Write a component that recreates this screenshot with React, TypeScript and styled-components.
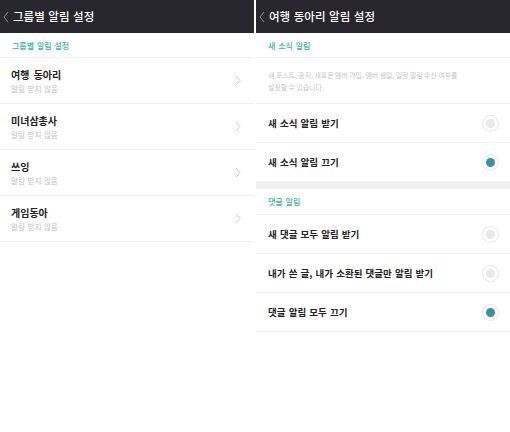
import React from 'react';
import styled, { createGlobalStyle } from 'styled-components';

const GlobalStyle = createGlobalStyle`
    html, body {
        margin: 0;
        padding: 0;
        background: #ffffff;
    }
    body {
        font-family: 'Noto Sans CJK KR', 'Noto Sans', sans-serif;
    }
`;

const groups = ['여행 동아리', '미녀삼총사', '쓰잉', '게임동아'];

const newsOptions = [
    { label: '새 소식 알림 받기', checked: false },
    { label: '새 소식 알림 끄기', checked: true },
];

const commentOptions = [
    { label: '새 댓글 모두 알림 받기', checked: false },
    { label: '내가 쓴 글, 내가 소환된 댓글만 알림 받기', checked: false },
    { label: '댓글 알림 모두 끄기', checked: true },
];

function BackIcon() {
    return (
        <svg width="6" height="12" viewBox="0 0 6 12">
            <polyline
                points="5,1 1,6 5,11"
                fill="none"
                stroke="#8a8a90"
                strokeWidth="1"
            />
        </svg>
    );
}

function ChevronIcon() {
    return (
        <svg width="6" height="11" viewBox="0 0 6 11">
            <polyline
                points="1,1 5,5.5 1,10"
                fill="none"
                stroke="#c8c8c8"
                strokeWidth="1"
            />
        </svg>
    );
}

function App() {
    return (
        <>
            <GlobalStyle />
            <StyledScreen>
                <StyledPanel>
                    <StyledHeader>
                        <BackIcon />
                        <span>그룹별 알림 설정</span>
                    </StyledHeader>
                    <StyledSectionLabel $height={24}>그룹별 알림 설정</StyledSectionLabel>
                    {groups.map((name) => (
                        <StyledGroupRow key={name}>
                            <div className="texts">
                                <div className="title">{name}</div>
                                <div className="sub">알림 받지 않음</div>
                            </div>
                            <ChevronIcon />
                        </StyledGroupRow>
                    ))}
                </StyledPanel>
                <StyledPanel>
                    <StyledHeader>
                        <BackIcon />
                        <span>여행 동아리 알림 설정</span>
                    </StyledHeader>
                    <StyledSectionLabel $height={24}>새 소식 알림</StyledSectionLabel>
                    <StyledDescription>
                        새 포스트, 공지, 새로운 멤버 가입, 멤버 생일, 일정 알림 수신 여부를
                        <br />
                        설정할 수 있습니다.
                    </StyledDescription>
                    {newsOptions.map((opt) => (
                        <StyledOptionRow key={opt.label}>
                            <span>{opt.label}</span>
                            <StyledRadio $checked={opt.checked} />
                        </StyledOptionRow>
                    ))}
                    <StyledBand />
                    <StyledSectionLabel $height={25}>댓글 알림</StyledSectionLabel>
                    {commentOptions.map((opt) => (
                        <StyledOptionRow key={opt.label}>
                            <span>{opt.label}</span>
                            <StyledRadio $checked={opt.checked} />
                        </StyledOptionRow>
                    ))}
                </StyledPanel>
            </StyledScreen>
        </>
    );
}

export default App;

const StyledScreen = styled.div`
    display: flex;
    gap: 2px;
    width: 510px;
    height: 432px;
    background: #ffffff;
    overflow: hidden;
`;

const StyledPanel = styled.div`
    flex: 1;
    display: flex;
    flex-direction: column;
    background: #ffffff;
`;

const StyledHeader = styled.div`
    height: 33px;
    flex-shrink: 0;
    display: flex;
    align-items: center;
    gap: 4px;
    padding-left: 3px;
    background: #27272d;
    color: #ffffff;
    font-size: 11.5px;
    font-weight: 500;
    word-spacing: 1px;

    span {
        margin-top: -1px;
    }
`;

const StyledSectionLabel = styled.div<{ $height: number }>`
    height: ${({ $height }) => $height}px;
    flex-shrink: 0;
    display: flex;
    align-items: center;
    padding-left: 12px;
    border-bottom: 1px solid #f0f0f0;
    color: #3db4a2;
    font-size: 8px;
    font-weight: 500;
    word-spacing: 1px;
`;

const StyledGroupRow = styled.div`
    height: 45px;
    flex-shrink: 0;
    display: flex;
    align-items: center;
    justify-content: space-between;
    padding: 0 13px 0 11px;
    border-bottom: 1px solid #f0f0f0;

    .texts {
        display: flex;
        flex-direction: column;
        gap: 3px;
    }
    .title {
        color: #222222;
        font-size: 10px;
        font-weight: 700;
        line-height: 12px;
        word-spacing: 2px;
    }
    .sub {
        color: #c0c0c0;
        font-size: 7.5px;
        line-height: 9px;
        word-spacing: 1px;
    }
`;

const StyledDescription = styled.div`
    height: 45px;
    flex-shrink: 0;
    display: flex;
    flex-direction: column;
    justify-content: center;
    padding-left: 12px;
    border-bottom: 1px solid #f0f0f0;
    color: #c4c4c4;
    font-size: 6.9px;
    line-height: 12px;
`;

const StyledOptionRow = styled.div`
    height: 38px;
    flex-shrink: 0;
    display: flex;
    align-items: center;
    justify-content: space-between;
    padding: 0 11px 0 12px;
    border-bottom: 1px solid #f0f0f0;
    color: #222222;
    font-size: 9.5px;
    font-weight: 700;
    word-spacing: 1px;
`;

const StyledRadio = styled.div<{ $checked: boolean }>`
    width: 17px;
    height: 17px;
    box-sizing: border-box;
    border-radius: 50%;
    border: 1px solid #e6e6e6;
    display: flex;
    align-items: center;
    justify-content: center;

    &::after {
        content: '';
        width: 9px;
        height: 9px;
        border-radius: 50%;
        background: ${({ $checked }) => ($checked ? '#3593a3' : '#e8e8e8')};
    }
`;

const StyledBand = styled.div`
    height: 7px;
    flex-shrink: 0;
    background: #f0f0f0;
`;
